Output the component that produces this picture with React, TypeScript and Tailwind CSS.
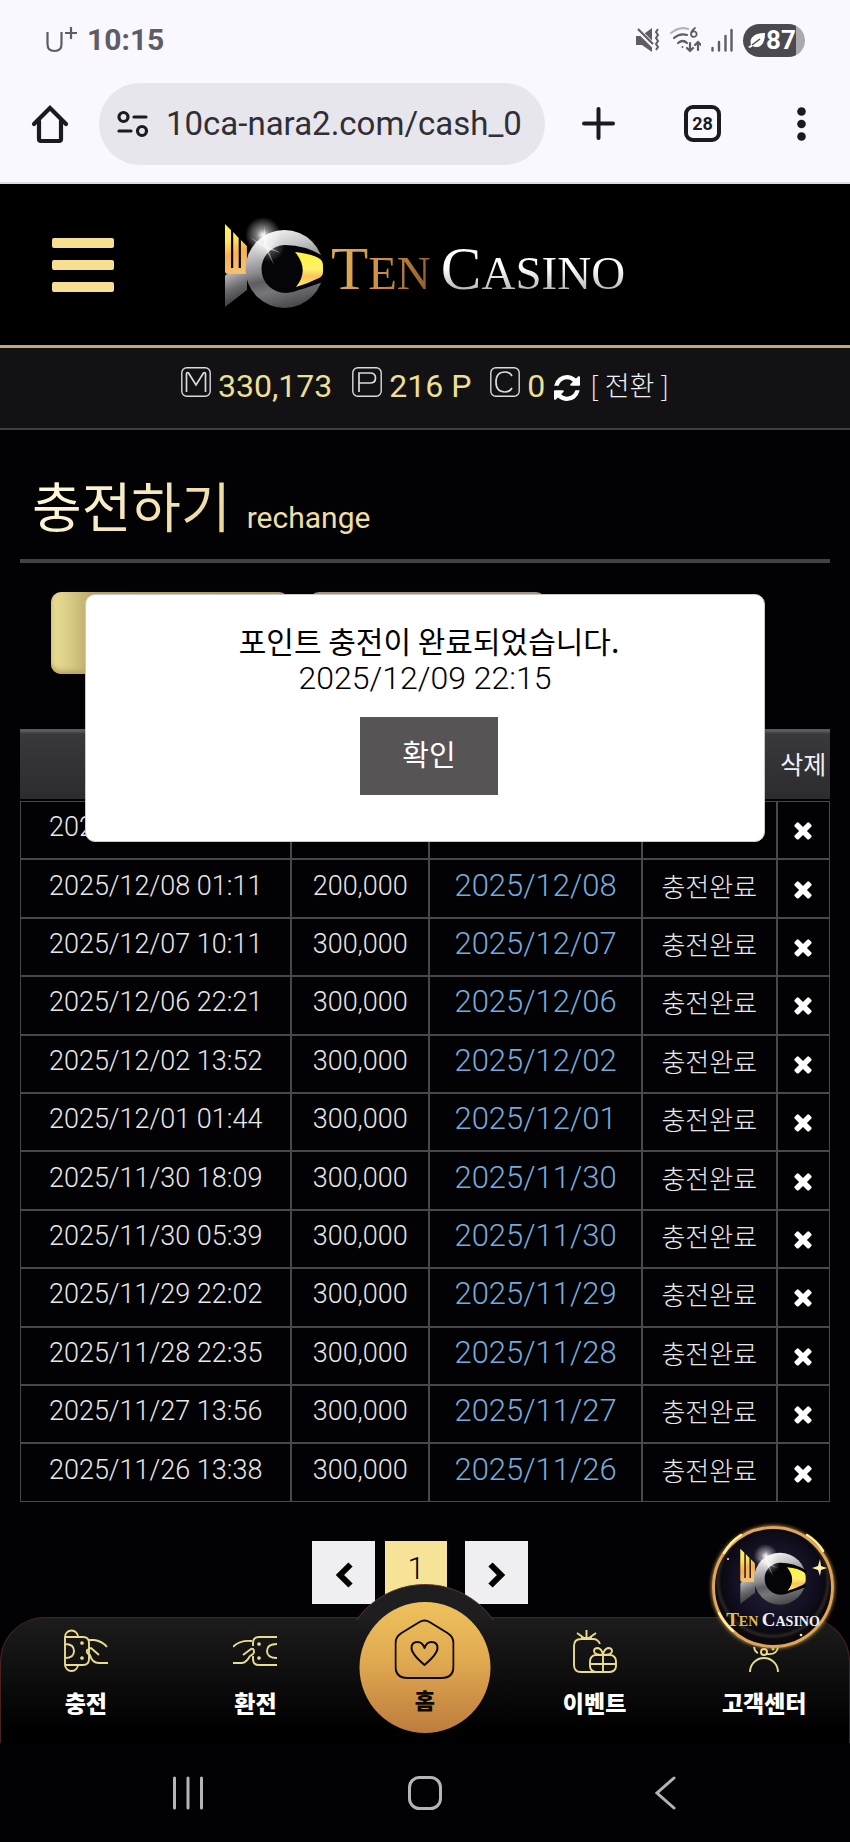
import React from "react";

const records = [
  ["2025/12/09 22:15", "300,000", "2025/12/09"],
  ["2025/12/08 01:11", "200,000", "2025/12/08"],
  ["2025/12/07 10:11", "300,000", "2025/12/07"],
  ["2025/12/06 22:21", "300,000", "2025/12/06"],
  ["2025/12/02 13:52", "300,000", "2025/12/02"],
  ["2025/12/01 01:44", "300,000", "2025/12/01"],
  ["2025/11/30 18:09", "300,000", "2025/11/30"],
  ["2025/11/30 05:39", "300,000", "2025/11/30"],
  ["2025/11/29 22:02", "300,000", "2025/11/29"],
  ["2025/11/28 22:35", "300,000", "2025/11/28"],
  ["2025/11/27 13:56", "300,000", "2025/11/27"],
  ["2025/11/26 13:38", "300,000", "2025/11/26"],
];

function StatusBar() {
  return (
    <div className="flex h-[80px] items-center justify-between pl-[46px] pr-[45px] text-[#5f5d63]">
      <div className="flex items-center gap-[9px]">
        <svg width="32" height="28" viewBox="0 0 32 28" fill="none" stroke="currentColor" strokeWidth="2.2" aria-hidden="true">
          <path d="M1.5 6v12q0 7 7 7t7-7V6M19 7h12M25 1v12" />
        </svg>
        <span className="font-[Roboto,sans-serif] text-[30px] font-bold leading-[36px]">10:15</span>
      </div>
      <div className="flex items-center gap-[10px]">
        <svg width="24" height="24" viewBox="0 0 24 24" aria-hidden="true">
          <path fill="currentColor" d="M0 8h5L16 0v24L6 17H0z" />
          <path d="M1 1l20 20" stroke="#f9f8ff" strokeWidth="5" />
          <path d="M2 1l15 15" stroke="currentColor" strokeWidth="2.2" />
          <path d="M22 1l-2 3 2 3-2 3 2 3-2 3 2 3-2 3" fill="none" stroke="currentColor" strokeWidth="2" />
        </svg>
        <svg width="31" height="26" viewBox="0 0 31 26" fill="none" stroke="currentColor" strokeWidth="2.2" strokeLinecap="round" aria-hidden="true">
          <path d="M1 6q9-7 17-4" stroke="#b5b4ba" />
          <path d="M4 11q6-5 13-3M8 16q5-4 9 0" />
          <circle cx="12.500" cy="20" r="1" fill="currentColor" stroke="none" />
          <path d="M25 1q-4 3-4 6a2.800 2.800 0 1 0 1-2" strokeWidth="1.800" />
          <path d="M20 16v8m-3-3 3 3 3-3M28 23v-8m-3 3 3-3 3 3" />
        </svg>
        <svg width="22" height="24" viewBox="0 0 22 24" fill="none" stroke="currentColor" strokeWidth="2.400" strokeLinecap="round" aria-hidden="true">
          <path d="M1.500 20v2.500M8 14v8.500M14.500 8v14.500M20.500 2v20.500" />
        </svg>
        <div className="flex h-[33px] w-[62px] items-center justify-center rounded-full bg-[linear-gradient(90deg,#4b4a50_86%,#aaa9af_86%)] pr-[4px] text-white">
          <svg width="18" height="17" viewBox="0 0 18 17" aria-hidden="true">
            <path fill="white" d="M3 13C1 6 6 1 17 1c0 9-3 14-9 14q-2 0-3-1l-3 2-2-1z" />
            <path d="M4 13l8-6" stroke="#4b4a50" strokeWidth="1.500" />
          </svg>
          <span className="font-[Roboto,sans-serif] text-[26px] font-bold leading-[33px]">87</span>
        </div>
      </div>
    </div>
  );
}

function BrowserBar() {
  return (
    <div className="flex h-[104px] items-center border-b-2 border-[#dddce3] pb-[15px] pl-[31px] pr-[44px] text-[#1b1a20]">
      <button type="button" aria-label="Home page">
        <svg width="38" height="40" viewBox="0 0 38 40" fill="none" stroke="currentColor" strokeWidth="4.200" strokeLinejoin="round" strokeLinecap="round">
          <path d="M3 20 19 4l16 16" strokeLinejoin="miter" />
          <path d="M8 17v18q0 2 2 2h18q2 0 2-2V17" />
        </svg>
      </button>
      <div className="ml-[30px] flex h-[82px] min-w-0 flex-1 items-center rounded-full bg-[#e7e6ec] pl-[17px]">
        <svg width="33" height="28" viewBox="0 0 33 28" fill="none" stroke="currentColor" strokeWidth="3.200" strokeLinecap="round" aria-hidden="true">
          <circle cx="7.500" cy="7" r="4.500" />
          <circle cx="26" cy="21" r="4.500" />
          <path d="M18 7h12M3 21h12" />
        </svg>
        <input
          aria-label="Address"
          readOnly
          value="10ca-nara2.com/cash_0"
          className="ml-[17px] min-w-0 flex-1 bg-transparent font-[Roboto,sans-serif] text-[33px] leading-[40px] text-[#302f35] outline-none"
        />
      </div>
      <button type="button" aria-label="New tab" className="ml-[37px]">
        <svg width="33" height="33" viewBox="0 0 33 33" stroke="currentColor" strokeWidth="4" strokeLinecap="round">
          <path d="M16.500 2v29M2 16.500h29" />
        </svg>
      </button>
      <button type="button" className="ml-[69px] flex size-[37px] items-center justify-center rounded-[9px] border-4 border-[#1b1a20] font-[Roboto,sans-serif] text-[18px] font-bold leading-[20px]">
        28
      </button>
      <button type="button" aria-label="Menu" className="ml-[76px]">
        <svg width="9" height="34" viewBox="0 0 9 34" fill="currentColor">
          <circle cx="4.500" cy="4.500" r="4.300" />
          <circle cx="4.500" cy="17" r="4.300" />
          <circle cx="4.500" cy="29.500" r="4.300" />
        </svg>
      </button>
    </div>
  );
}

function FishMark({ id, className }: { id: string; className: string }) {
  return (
    <svg className={className} viewBox="226 216 98 96" aria-hidden="true">
      <defs>
        <linearGradient id={`${id}-gold`} x1="0" y1="0" x2="0.200" y2="1">
          <stop offset="0" stopColor="#fff45e" />
          <stop offset="0.350" stopColor="#ffe55c" />
          <stop offset="0.650" stopColor="#fbb04e" />
          <stop offset="1" stopColor="#f3c070" />
        </linearGradient>
        <linearGradient id={`${id}-eye`} x1="0" y1="0" x2="0" y2="1">
          <stop offset="0" stopColor="#fdf43f" />
          <stop offset="0.500" stopColor="#fff06a" />
          <stop offset="0.700" stopColor="#fbc15c" />
          <stop offset="1" stopColor="#fff35c" />
        </linearGradient>
        <linearGradient id={`${id}-ring`} x1="0.300" y1="0" x2="0.550" y2="1">
          <stop offset="0" stopColor="#f4f4f5" />
          <stop offset="0.250" stopColor="#c4c4c6" />
          <stop offset="0.480" stopColor="#8b8b8d" />
          <stop offset="0.600" stopColor="#5e5d60" />
          <stop offset="0.750" stopColor="#77767a" />
          <stop offset="1" stopColor="#48474a" />
        </linearGradient>
        <linearGradient id={`${id}-tail`} x1="0" y1="0" x2="0.300" y2="1">
          <stop offset="0" stopColor="#bdbdc0" />
          <stop offset="0.500" stopColor="#6b6b6e" />
          <stop offset="1" stopColor="#353437" />
        </linearGradient>
        <radialGradient id={`${id}-glow`}>
          <stop offset="0" stopColor="#ffffff" stopOpacity="1" />
          <stop offset="0.350" stopColor="#ffffff" stopOpacity="0.500" />
          <stop offset="1" stopColor="#ffffff" stopOpacity="0" />
        </radialGradient>
      </defs>
      <path d="M226 276q0-3 3-3h19v16l-22 17z" fill={`url(#${id}-tail)`} />
      <path d="M226 223l6 6v38h2.200v-36l5.500 6v30h2.200v-28l6 6v28h-19q-3 0-3-3z" fill={`url(#${id}-gold)`} />
      <circle cx="285.500" cy="268" r="39" fill={`url(#${id}-ring)`} />
      <path d="M286 244q20 0 38 11v26q-14 5-24 8-7 3-13 3a24 24 0 0 1-1-48z" fill="#050408" />
      <path d="M296 251q18 2 25 7 3 2 3 7v6q0 4-4 6-10 5-23 9 14-17-1-35z" fill={`url(#${id}-eye)`} />
      <circle cx="264" cy="234" r="18" fill={`url(#${id}-glow)`} />
      <circle cx="270" cy="245" r="16" fill={`url(#${id}-glow)`} opacity="0.550" />
      <path d="M265 225l3 20 14 7-13-4 6 16-9-17-16-11 15 8z" fill="white" opacity="0.500" />
    </svg>
  );
}

function SiteHeader() {
  return (
    <header className="grid h-[161px] grid-cols-[1fr_auto_1fr] items-center bg-black px-[52px]">
      <button type="button" aria-label="Open menu" className="flex w-[62px] flex-col gap-[12px]">
        <span className="h-[10px] rounded-[2px] bg-[#f6df90]" />
        <span className="h-[10px] rounded-[2px] bg-[#f6df90]" />
        <span className="h-[10px] rounded-[2px] bg-[#f6df90]" />
      </button>
      <a href="#home" className="flex items-center gap-[8px] font-['Liberation_Serif',serif] text-[47px] leading-[62px]">
        <FishMark id="brand" className="h-[96px] w-[98px]" />
        <span className="flex items-baseline gap-[10px] pt-[12px]">
          <span className="bg-[linear-gradient(100deg,#dcab54_15%,#d08f3e_50%,#8a5a2c)] bg-clip-text text-transparent">
            <span className="text-[61px]">T</span>EN
          </span>
          <span className="bg-[linear-gradient(180deg,#ffffff_45%,#a9a9ad_85%)] bg-clip-text text-transparent">
            <span className="text-[61px]">C</span>ASINO
          </span>
        </span>
      </a>
    </header>
  );
}

function Badge({ label, d }: { label: string; d: string }) {
  return (
    <svg role="img" aria-label={label} width="30" height="30" viewBox="0 0 30 30" fill="none" stroke="#dad9de" strokeWidth="1.400">
      <rect x="0.800" y="0.800" width="28.400" height="28.400" rx="5" />
      <path d={d} strokeWidth="1.700" />
    </svg>
  );
}

function Balance() {
  return (
    <div className="flex h-[85px] items-start justify-center border-b-2 border-t-[3px] border-b-[#3f3e42] border-t-[#c3a877] bg-[#121214] pt-[19px] font-[Roboto,sans-serif] text-[32px] leading-[38px] text-[#efdf95]">
      <div className="flex gap-[7px]">
        <Badge label="M" d="M5.500 25V7q0-2 2-1l7.500 12 7.500-12q2-1 2 1v18" />
        <span>330,173</span>
      </div>
      <div className="ml-[20px] flex gap-[7px]">
        <Badge label="P" d="M7 25V6h11q5.500 0 5.500 5t-5.500 5H7" />
        <span>216 P</span>
      </div>
      <div className="ml-[19px] flex gap-[7px]">
        <Badge label="C" d="M22 9q-2-4-7-4-9 0-9 10t9 10q5 0 7-4" />
        <span>0</span>
      </div>
      <button type="button" aria-label="Refresh" className="ml-[9px] mt-[8px]">
        <svg width="26" height="26" viewBox="0 0 1536 1536" fill="white">
          <path d="M1511 928q0 5-1 7-64 268-268 434.500t-478 166.500q-146 0-282.500-55t-243.500-157l-129 129q-19 19-45 19t-45-19-19-45v-448q0-26 19-45t45-19h448q26 0 45 19t19 45-19 45l-137 137q71 66 161 102t187 36q134 0 250-65t186-179q11-17 53-117 8-23 30-23h192q13 0 22.500 9.500t9.500 22.500zm25-800v448q0 26-19 45t-45 19h-448q-26 0-45-19t-19-45 19-45l138-138q-148-137-349-137-134 0-250 65t-186 179q-11 17-53 117-8 23-30 23h-199q-13 0-22.500-9.500t-9.500-22.500v-7q65-268 270-434.500t480-166.500q146 0 284 55.500t245 156.500l130-129q19-19 45-19t45 19 19 45z" />
        </svg>
      </button>
      <button type="button" className="ml-[10px] font-['Noto_Sans_CJK_KR',sans-serif] text-[27px] font-light leading-[36px] text-[#f1f0f4]">
        [ 전환 ]
      </button>
    </div>
  );
}

function CloseIcon() {
  return (
    <svg width="26" height="26" viewBox="0 0 1792 1792" fill="white">
      <path d="M1490 1322q0 40-28 68l-136 136q-28 28-68 28t-68-28l-294-294-294 294q-28 28-68 28t-68-28l-136-136q-28-28-28-68t28-68l294-294-294-294q-28-28-28-68t28-68l136-136q28-28 68-28t68 28l294 294 294-294q28-28 68-28t68 28l136 136q28 28 28 68t-28 68l-294 294 294 294q28 28 28 68z" />
    </svg>
  );
}

const cell = "h-[58px] border border-[#48474b] p-0 pb-[6px] align-middle";

function History() {
  return (
    <table className="mt-[55px] h-[773px] w-full table-fixed border-separate border-spacing-0 text-center font-light">
      <colgroup>
        <col className="w-[33.500%]" />
        <col className="w-[17%]" />
        <col className="w-[26.300%]" />
        <col className="w-[16.600%]" />
        <col className="w-[6.600%]" />
      </colgroup>
      <thead>
        <tr className="h-[72px] bg-[linear-gradient(180deg,#5b5a5e_0,#5b5a5e_2px,#39383b_5px,#2c2b2e_70px,#000_70px)]">
          <th colSpan={4} className="p-0" />
          <th className="whitespace-nowrap p-0 pb-[4px] text-[25px] font-normal leading-[36px] text-[#f1f0f4]">삭제</th>
        </tr>
      </thead>
      <tbody>
        {records.map(([requested, amount, done]) => (
          <tr key={requested}>
            <td className={`${cell} whitespace-nowrap font-[Roboto,sans-serif] text-[27px] leading-[36px] text-[#e8e7ea]`}>{requested}</td>
            <td className={`${cell} font-[Roboto,sans-serif] text-[27px] leading-[36px] text-[#e8e7ea]`}>{amount}</td>
            <td className={`${cell} font-[Roboto,sans-serif] text-[31px] leading-[36px] text-[#76aadd]`}>{done}</td>
            <td className={`${cell} text-[26px] leading-[36px] text-[#e8e7ea]`}>충전완료</td>
            <td className="h-[58px] border border-[#48474b] p-0">
              <button type="button" aria-label="삭제" className="mx-auto block">
                <CloseIcon />
              </button>
            </td>
          </tr>
        ))}
      </tbody>
    </table>
  );
}

function Alert() {
  return (
    <div role="alertdialog" aria-label="포인트 충전" className="absolute inset-x-[8%] top-[2px] flex flex-col items-center rounded-[10px] border border-[#c9c8cc] bg-white pb-[46px] pl-[8px] pt-[27px] text-black">
      <p className="text-[30px] font-normal leading-[36px]">포인트 충전이 완료되었습니다.</p>
      <p className="mt-[2px] pr-[8px] font-[Roboto,sans-serif] text-[32px] font-light leading-[36px]">2025/12/09 22:15</p>
      <button type="button" className="mt-[21px] h-[78px] w-[138px] bg-[#575456] pb-[6px] text-[29px] font-normal leading-[40px] text-white">
        확인
      </button>
    </div>
  );
}

function Pager() {
  const arrow = "flex size-[63px] items-center justify-center bg-[#efeef1]";
  return (
    <nav aria-label="Pages" className="mt-[39px] flex pl-[292px] text-black">
      <button type="button" aria-label="Previous" className={arrow}>
        <svg width="18" height="28" viewBox="0 0 18 28" fill="none" stroke="black" strokeWidth="6" className="mt-[4px]">
          <path d="M15.500 3.500 5 14l10.500 10.500" />
        </svg>
      </button>
      <button type="button" aria-current="page" className="ml-[10px] size-[62px] bg-[#f6e397] pb-[6px] font-[Roboto,sans-serif] text-[31px] font-light leading-[36px]">
        1
      </button>
      <button type="button" aria-label="Next" className={`${arrow} ml-[18px]`}>
        <svg width="18" height="28" viewBox="0 0 18 28" fill="none" stroke="black" strokeWidth="6" className="mt-[4px]">
          <path d="M2.500 3.500 13 14 2.500 24.500" />
        </svg>
      </button>
    </nav>
  );
}

const navIcons = {
  charge: (
    <>
      <path d="M14 8a6.500 6.500 0 0 0-13 0v27.500a6.500 6.500 0 0 0 13 0M1 8h18q6 0 6 6v16q0 6-6 6H1M1 15q9 0 9 7t-9 7" />
      <path d="M25 11h5q8 1 13 7M35 26l-8-7-4 2q-1 3 3 5 2 8 9 8h9" />
      <circle cx="18" cy="14" r="0.900" />
      <circle cx="18" cy="29" r="0.900" />
    </>
  ),
  withdraw: (
    <>
      <path d="M44 8H26q-6 0-6 6v3M20 27v3q0 6 6 6h18M44 15q-10 0-10 7t10 7" />
      <path d="M0 18q6-7 19-6M10 26l8-6q3-1 3 3 0 2-4 4-4 7-8 7H0" />
      <circle cx="26" cy="15" r="0.900" />
      <circle cx="26" cy="29" r="0.900" />
    </>
  ),
  event: (
    <>
      <path d="M27 15q-2-5-7-5H8q-7 0-7 7v19q0 7 7 7h28M13.500 9V1M11 9 4 4M16 9l7-5M8 9h11" />
      <rect x="17" y="26" width="26" height="17" rx="6" />
      <path d="M30 26v17M17 35h26M30 26q-9 0-9-4 0-3 4-3 4 1 5 7 1-6 5-7 4 0 4 3 0 4-9 4z" />
    </>
  ),
  support: (
    <>
      <path d="M8 43a14 14 0 0 1 28 0M12 18q1 5 4 6M36 18q-1 8-11 7" />
      <circle cx="22" cy="23" r="3" />
      <circle cx="31" cy="20" r="0.500" />
    </>
  ),
};

function NavItem({ icon, label }: { icon: keyof typeof navIcons; label: string }) {
  return (
    <a href={`#${icon}`} className="flex flex-col items-center pt-[11px]">
      <svg width="44" height="44" viewBox="0 0 44 44" fill="none" stroke="#eadb8f" strokeWidth="1.900" strokeLinejoin="round" aria-hidden="true">
        {navIcons[icon]}
      </svg>
      <span className="mt-[11px] text-[23px] font-black leading-[36px] text-white">{label}</span>
    </a>
  );
}

function BottomNav() {
  return (
    <div className="relative">
      <nav aria-label="Main" className="grid h-[126px] grid-cols-5 rounded-t-[45px] border-x border-t border-[#482226] bg-[linear-gradient(180deg,#1c1c1c,#0b0b0b_55%,#000_90%)]">
        <NavItem icon="charge" label="충전" />
        <NavItem icon="withdraw" label="환전" />
        <div className="relative">
          <div className="absolute left-1/2 top-[-34px] flex h-[36px] w-[168px] -translate-x-1/2 justify-center overflow-hidden">
            <div className="size-[168px] shrink-0 rounded-full border border-[#5a3634] bg-[#1e1d1f]" />
          </div>
          <a href="#home" className="absolute left-1/2 top-[-16px] flex size-[131px] -translate-x-1/2 flex-col items-center rounded-full bg-[linear-gradient(180deg,#eec25c,#e0a950_45%,#bd7c3d)] pt-[17px] text-[#0d0a05]">
            <svg width="60" height="60" viewBox="0 0 60 60" fill="none" stroke="currentColor" strokeWidth="2" strokeLinejoin="round" aria-hidden="true">
              <path d="M25 3q5-3 10 0l18 11q6 4 6 10v23q0 12-12 12H13Q1 59 1 47V24q0-6 6-10z" />
              <path d="M30 46Q17 35 17 29q0-6 6-6 5 0 7 6 2-6 7-6 6 0 6 6 0 6-13 17z" />
            </svg>
            <span className="mt-[2px] text-[22px] font-black leading-[36px]">홈</span>
          </a>
        </div>
        <NavItem icon="event" label="이벤트" />
        <NavItem icon="support" label="고객센터" />
      </nav>
      <a href="#chat" className="absolute right-[16px] top-[-91px] flex size-[122px] flex-col items-center rounded-full border-[3px] border-[#dfa55a] bg-[radial-gradient(circle_at_50%_45%,#25223a_0%,#100e1e_50%,#0a0912_60%,#2b2520_64%,#0b090c_67%)] pt-[15px] shadow-[0_0_4px_#e9b45f]">
        <FishMark id="chat" className="h-[64px] w-[66px]" />
        <span className="mt-[2px] whitespace-nowrap font-['Liberation_Serif',serif] text-[14px] font-bold leading-[20px] text-[#f1f0f4]">
          <span className="text-[#e3c04f]">
            <span className="text-[19px]">T</span>EN
          </span>{" "}
          <span className="text-[19px]">C</span>ASINO
        </span>
        <svg className="absolute inset-0 size-full" viewBox="0 0 116 116" fill="#fff0a8" aria-hidden="true">
          <path d="M105 30l1 7 6 2-6 2-1 6-2-6-6-2 6-2z" />
          <path d="M9 24q6-11 17-18M92 6q10 6 16 16M4 84q5 10 14 18" fill="none" stroke="#fff09a" strokeWidth="2.500" strokeLinecap="round" />
          <circle cx="13" cy="30" r="1" />
          <circle cx="86" cy="106" r="1.300" />
        </svg>
      </a>
    </div>
  );
}

function SystemNav() {
  return (
    <div className="grid h-[99px] grid-cols-[2fr_1fr_2fr] items-center text-[#b5b4b8]">
      <button type="button" aria-label="Recent apps" className="ml-[36px] justify-self-center">
        <svg width="32" height="34" viewBox="0 0 32 34" stroke="currentColor" strokeWidth="3" strokeLinecap="round">
          <path d="M2.500 2v30M16 2v30M29.500 2v30" />
        </svg>
      </button>
      <button type="button" aria-label="Home screen" className="justify-self-center">
        <svg width="34" height="34" viewBox="0 0 34 34" fill="none" stroke="currentColor" strokeWidth="3">
          <rect x="1.500" y="1.500" width="31" height="31" rx="10" />
        </svg>
      </button>
      <button type="button" aria-label="Back" className="mr-[30px] justify-self-center">
        <svg width="22" height="34" viewBox="0 0 22 34" fill="none" stroke="currentColor" strokeWidth="3" strokeLinecap="round">
          <path d="M20 2 3 17l17 15" />
        </svg>
      </button>
    </div>
  );
}

export default function App() {
  return (
    <div className="flex min-h-screen flex-col bg-[#020103] font-['Noto_Sans_CJK_KR',sans-serif]">
      <div className="bg-[#f9f8ff]">
        <StatusBar />
        <BrowserBar />
      </div>
      <SiteHeader />
      <Balance />
      <main className="flex-1 px-[20px] pb-[12px]">
        <h1 className="flex items-baseline gap-[16px] border-b-4 border-[#434246] pb-[2px] pl-[12px] pt-[36px] leading-[78px]">
          <span className="bg-[linear-gradient(135deg,#fffbe0_10%,#ecd69a_90%)] bg-clip-text text-[54px] font-normal text-transparent">충전하기</span>
          <span className="font-[Roboto,sans-serif] text-[30px] font-normal text-[#efdfa0]">rechange</span>
        </h1>
        <div className="relative pt-[29px]">
          <div className="flex gap-[20px] pl-[31px]">
            <div className="h-[82px] w-[238px] rounded-[10px] bg-[linear-gradient(90deg,#ebdf97,#d8cb85_8%,#b9a568_18%,#a79b6c)] shadow-[inset_0_-3px_5px_#b5a35e]" />
            <div className="h-[82px] w-[237px] rounded-[10px] bg-[#a1957b]" />
          </div>
          <History />
          <div className="absolute inset-x-0 top-[29px]">
            <Alert />
          </div>
        </div>
        <Pager />
      </main>
      <BottomNav />
      <SystemNav />
    </div>
  );
}
